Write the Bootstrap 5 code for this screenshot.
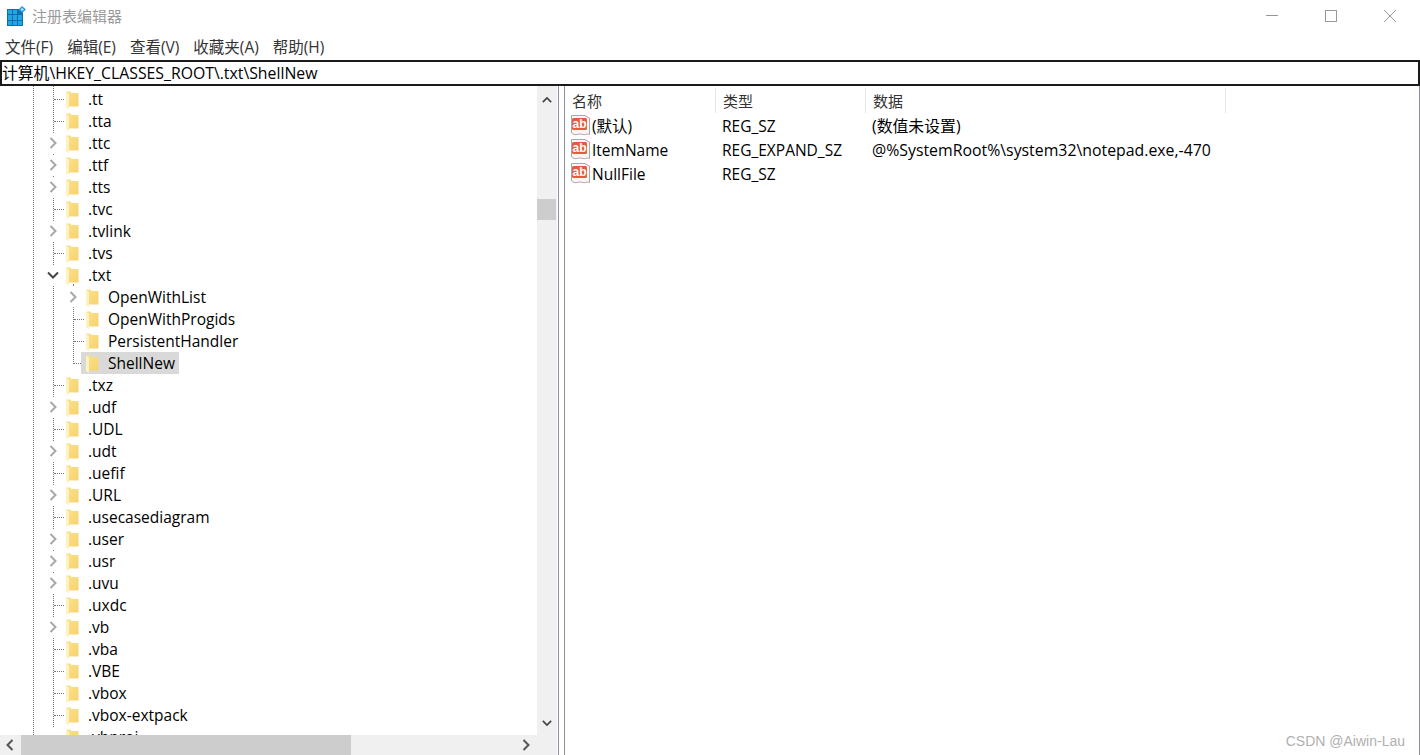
<!DOCTYPE html>
<html lang="zh-CN">
<head>
<meta charset="utf-8">
<title>注册表编辑器</title>
<link href="https://cdn.jsdelivr.net/npm/bootstrap@5.3.0/dist/css/bootstrap.min.css" rel="stylesheet">
<style>
html,body{height:100%;margin:0;overflow:hidden;background:#fff}
body{font-family:"Open Sans","Noto Sans CJK SC",sans-serif;font-size:15.5px;color:#000;line-height:22px}
.reg-win{height:755px;width:1420px;position:relative}
.reg-title{height:35px;padding-left:7px}
.reg-title-icon{margin-top:6px}
.reg-title-text{font-size:15px;color:#999;margin-left:6px;margin-top:5px}
.reg-ctls{margin-right:3px}
.reg-ctl{width:55px;height:32px;display:flex;align-items:center;justify-content:center;margin-left:4px}
.reg-menu{height:25px;padding-left:5px;padding-top:1px;gap:14px;color:#333}
.reg-addr{height:26px;border:2px solid #1a1a1a;padding-left:0;line-height:23px;font-size:15.8px;color:#000;white-space:nowrap;background:#fff}
.reg-body{height:669px}
.reg-left{width:558px}
.reg-tree-wrap{width:537px;position:relative;overflow:hidden}
.reg-vbar{width:20px;background:#f0f0f0;position:relative}
.reg-thumb{position:absolute;left:0;right:1px;top:113px;height:21px;background:#cdcdcd}
.reg-sb-up{position:absolute;left:4px;top:9px}
.reg-sb-dn{position:absolute;left:4px;top:632px}
.reg-hbar{height:20px;background:#f0f0f0;position:relative;margin-right:1px}
.reg-hthumb{position:absolute;left:21px;width:330px;top:0;bottom:0;background:#cdcdcd}
.reg-hl{position:absolute;left:4px;top:4px}
.reg-hr{position:absolute;left:520px;top:4px}
.reg-split{width:7px;border-left:1px solid #8f8fa0;border-right:1px solid #8f8fa0}
.reg-right{border-right:1px solid #8f8fa0;position:relative}
.reg-tree{padding-top:2px}
.reg-row{height:22px;position:relative;white-space:nowrap}
.reg-l1{padding-left:66px}
.reg-l2{padding-left:86px}
.reg-fld{width:13px;height:18px;margin-right:9px;vertical-align:top;margin-top:3px}
.reg-sel{display:inline-block;background:#d9d9d9;height:22px;padding-right:4px;margin-left:-5px;padding-left:5px}
.reg-vline{position:absolute;width:0;border-left:1px dotted #777}
.reg-hline{position:absolute;height:0;border-top:1px dotted #777}
.reg-chev{position:absolute;top:1px;width:12px;height:20px;padding:4px 0;background:#fff;box-sizing:border-box}
.reg-head{height:28px;color:#333;font-size:15px}
.reg-th{padding-left:7px;border-right:1px solid #e5e5e5;height:25px;line-height:26px;margin-top:2px}
.reg-c1{width:151px}
.reg-c2{width:150px}
.reg-c3{width:360px}
.reg-list-row{height:24px;line-height:24px;white-space:nowrap}
.reg-ab{width:21px;height:21px;margin:1px 1px 0 5px;flex:none}
.reg-name{width:130px}
.reg-type{width:150px}
.reg-data{font-size:15.85px}
.reg-mark{position:absolute;right:15px;bottom:5px;font-size:14px;color:#b0b0b0;font-family:"Liberation Sans",sans-serif;line-height:18px}
</style>
</head>
<body>
<svg width="0" height="0" class="d-block position-absolute">
<defs>
<linearGradient id="fg" x1="0" y1="0" x2="1" y2="1"><stop offset="0" stop-color="#fbe28f"/><stop offset="1" stop-color="#f6d169"/></linearGradient>
<symbol id="fld" viewBox="0 0 13 18">
<path d="M0 0.500H4.500L5.500 2H12.500V15.500H3V18L0 16Z" fill="url(#fg)"/>
<path d="M0 0.500L3 3V18L0 16Z" fill="#fef2c0"/>
</symbol>
<symbol id="cr" viewBox="0 0 12 12"><path d="M3.500 1L8.500 6L3.500 11" fill="none" stroke="#a8a8a8" stroke-width="2"/></symbol>
<symbol id="crd" viewBox="0 0 12 12"><path d="M3.500 1L8.500 6L3.500 11" fill="none" stroke="#555" stroke-width="2"/></symbol>
<symbol id="cd" viewBox="0 0 12 12"><path d="M1 3.500L6 8.500L11 3.500" fill="none" stroke="#444" stroke-width="2"/></symbol>
<symbol id="abi" viewBox="0 0 21 21">
<path d="M1.500 0.500H15L19.500 3V19.500C17 18 15.500 20.500 12.500 19.500C9.500 18 7 20.500 4 19.500C3 19 2 18 1.500 18Z" fill="#f6f6f6" stroke="#a8a8a8"/>
<rect x="2" y="3" width="15" height="12" rx="1.500" fill="#e25c40"/>
<text x="9.500" y="13" text-anchor="middle" font-family="Liberation Sans,sans-serif" font-weight="700" font-size="12" fill="#fff">ab</text>
</symbol>
</defs>
</svg>
<div class="reg-win d-flex flex-column">
  <div class="reg-title d-flex align-items-start flex-shrink-0">
    <svg class="reg-title-icon" width="19" height="20" viewBox="0 0 19 20"><rect x="0" y="3" width="16" height="17" fill="#0a6fb0"/><g fill="#27a5e0"><rect x="1" y="4" width="4" height="4"/><rect x="6" y="4" width="4" height="4"/><rect x="1" y="9" width="4" height="5"/><rect x="6" y="9" width="4" height="5"/><rect x="11" y="9" width="4" height="5"/><rect x="1" y="15" width="4" height="4"/><rect x="6" y="15" width="4" height="4"/><rect x="11" y="15" width="4" height="4"/></g><path d="M15 0L19 3.500L15 7L11.500 3.500Z" fill="#2c9ad6"/><path d="M15 2L17 3.500L15 5L13.500 3.500Z" fill="#bfe6f8"/></svg>
    <span class="reg-title-text">注册表编辑器</span>
    <div class="reg-ctls ms-auto d-flex">
      <div class="reg-ctl"><svg width="12" height="2"><rect width="12" height="1" fill="#999"/></svg></div>
      <div class="reg-ctl"><svg width="12" height="12"><rect x=".5" y=".5" width="11" height="11" fill="none" stroke="#999"/></svg></div>
      <div class="reg-ctl"><svg width="12" height="12"><path d="M0 0L12 12M12 0L0 12" stroke="#999"/></svg></div>
    </div>
  </div>
  <div class="reg-menu d-flex flex-shrink-0"><span>文件(F)</span><span>编辑(E)</span><span>查看(V)</span><span>收藏夹(A)</span><span>帮助(H)</span></div>
  <div class="reg-addr flex-shrink-0">计算机\HKEY_CLASSES_ROOT\.txt\ShellNew</div>
  <div class="reg-body d-flex flex-grow-1">
    <div class="reg-left d-flex flex-column flex-shrink-0">
      <div class="d-flex flex-grow-1 overflow-hidden">
        <div class="reg-tree-wrap">
          <div class="reg-vline" style="left:33px;top:0;height:649px"></div>
          <div class="reg-vline" style="left:53px;top:0;height:641px"></div>
          <div class="reg-vline" style="left:73px;top:198px;height:80px"></div>
          <div class="reg-tree">
            <div class="reg-row reg-l1"><i class="reg-hline" style="left:54px;top:11px;width:10px"></i><svg class="reg-fld"><use href="#fld"/></svg>.tt</div>
            <div class="reg-row reg-l1"><i class="reg-hline" style="left:54px;top:11px;width:10px"></i><svg class="reg-fld"><use href="#fld"/></svg>.tta</div>
            <div class="reg-row reg-l1"><svg class="reg-chev" style="left:47px"><use href="#cr"/></svg><svg class="reg-fld"><use href="#fld"/></svg>.ttc</div>
            <div class="reg-row reg-l1"><svg class="reg-chev" style="left:47px"><use href="#cr"/></svg><svg class="reg-fld"><use href="#fld"/></svg>.ttf</div>
            <div class="reg-row reg-l1"><svg class="reg-chev" style="left:47px"><use href="#cr"/></svg><svg class="reg-fld"><use href="#fld"/></svg>.tts</div>
            <div class="reg-row reg-l1"><i class="reg-hline" style="left:54px;top:11px;width:10px"></i><svg class="reg-fld"><use href="#fld"/></svg>.tvc</div>
            <div class="reg-row reg-l1"><svg class="reg-chev" style="left:47px"><use href="#cr"/></svg><svg class="reg-fld"><use href="#fld"/></svg>.tvlink</div>
            <div class="reg-row reg-l1"><i class="reg-hline" style="left:54px;top:11px;width:10px"></i><svg class="reg-fld"><use href="#fld"/></svg>.tvs</div>
            <div class="reg-row reg-l1"><svg class="reg-chev" style="left:47px"><use href="#cd"/></svg><svg class="reg-fld"><use href="#fld"/></svg>.txt</div>
            <div class="reg-row reg-l2"><svg class="reg-chev" style="left:67px"><use href="#cr"/></svg><svg class="reg-fld"><use href="#fld"/></svg>OpenWithList</div>
            <div class="reg-row reg-l2"><i class="reg-hline" style="left:74px;top:11px;width:10px"></i><svg class="reg-fld"><use href="#fld"/></svg>OpenWithProgids</div>
            <div class="reg-row reg-l2"><i class="reg-hline" style="left:74px;top:11px;width:10px"></i><svg class="reg-fld"><use href="#fld"/></svg>PersistentHandler</div>
            <div class="reg-row reg-l2"><i class="reg-hline" style="left:74px;top:11px;width:7px"></i><span class="reg-sel"><svg class="reg-fld"><use href="#fld"/></svg>ShellNew</span></div>
            <div class="reg-row reg-l1"><i class="reg-hline" style="left:54px;top:11px;width:10px"></i><svg class="reg-fld"><use href="#fld"/></svg>.txz</div>
            <div class="reg-row reg-l1"><svg class="reg-chev" style="left:47px"><use href="#cr"/></svg><svg class="reg-fld"><use href="#fld"/></svg>.udf</div>
            <div class="reg-row reg-l1"><i class="reg-hline" style="left:54px;top:11px;width:10px"></i><svg class="reg-fld"><use href="#fld"/></svg>.UDL</div>
            <div class="reg-row reg-l1"><svg class="reg-chev" style="left:47px"><use href="#cr"/></svg><svg class="reg-fld"><use href="#fld"/></svg>.udt</div>
            <div class="reg-row reg-l1"><i class="reg-hline" style="left:54px;top:11px;width:10px"></i><svg class="reg-fld"><use href="#fld"/></svg>.uefif</div>
            <div class="reg-row reg-l1"><svg class="reg-chev" style="left:47px"><use href="#cr"/></svg><svg class="reg-fld"><use href="#fld"/></svg>.URL</div>
            <div class="reg-row reg-l1"><i class="reg-hline" style="left:54px;top:11px;width:10px"></i><svg class="reg-fld"><use href="#fld"/></svg>.usecasediagram</div>
            <div class="reg-row reg-l1"><svg class="reg-chev" style="left:47px"><use href="#cr"/></svg><svg class="reg-fld"><use href="#fld"/></svg>.user</div>
            <div class="reg-row reg-l1"><svg class="reg-chev" style="left:47px"><use href="#cr"/></svg><svg class="reg-fld"><use href="#fld"/></svg>.usr</div>
            <div class="reg-row reg-l1"><svg class="reg-chev" style="left:47px"><use href="#cr"/></svg><svg class="reg-fld"><use href="#fld"/></svg>.uvu</div>
            <div class="reg-row reg-l1"><i class="reg-hline" style="left:54px;top:11px;width:10px"></i><svg class="reg-fld"><use href="#fld"/></svg>.uxdc</div>
            <div class="reg-row reg-l1"><svg class="reg-chev" style="left:47px"><use href="#cr"/></svg><svg class="reg-fld"><use href="#fld"/></svg>.vb</div>
            <div class="reg-row reg-l1"><i class="reg-hline" style="left:54px;top:11px;width:10px"></i><svg class="reg-fld"><use href="#fld"/></svg>.vba</div>
            <div class="reg-row reg-l1"><i class="reg-hline" style="left:54px;top:11px;width:10px"></i><svg class="reg-fld"><use href="#fld"/></svg>.VBE</div>
            <div class="reg-row reg-l1"><i class="reg-hline" style="left:54px;top:11px;width:10px"></i><svg class="reg-fld"><use href="#fld"/></svg>.vbox</div>
            <div class="reg-row reg-l1"><i class="reg-hline" style="left:54px;top:11px;width:10px"></i><svg class="reg-fld"><use href="#fld"/></svg>.vbox-extpack</div>
            <div class="reg-row reg-l1"><svg class="reg-fld"><use href="#fld"/></svg>.vbproj</div>
          </div>
        </div>
        <div class="reg-vbar">
          <svg class="reg-sb-up" width="12" height="10"><use href="#cd" transform="rotate(180 6 5)"/></svg>
          <div class="reg-thumb"></div>
          <svg class="reg-sb-dn" width="12" height="10"><use href="#cd"/></svg>
        </div>
      </div>
      <div class="reg-hbar flex-shrink-0">
        <svg class="reg-hl" width="12" height="12"><use href="#crd" transform="rotate(180 6 6)"/></svg>
        <div class="reg-hthumb"></div>
        <svg class="reg-hr" width="12" height="12"><use href="#crd"/></svg>
      </div>
    </div>
    <div class="reg-split flex-shrink-0"></div>
    <div class="reg-right flex-grow-1">
      <div class="reg-head d-flex">
        <div class="reg-th reg-c1">名称</div>
        <div class="reg-th reg-c2">类型</div>
        <div class="reg-th reg-c3">数据</div>
      </div>
      <div class="reg-list-row d-flex"><svg class="reg-ab"><use href="#abi"/></svg><span class="reg-name">(默认)</span><span class="reg-type">REG_SZ</span><span class="reg-data">(数值未设置)</span></div>
      <div class="reg-list-row d-flex"><svg class="reg-ab"><use href="#abi"/></svg><span class="reg-name">ItemName</span><span class="reg-type">REG_EXPAND_SZ</span><span class="reg-data">@%SystemRoot%\system32\notepad.exe,-470</span></div>
      <div class="reg-list-row d-flex"><svg class="reg-ab"><use href="#abi"/></svg><span class="reg-name">NullFile</span><span class="reg-type">REG_SZ</span></div>
    </div>
  </div>
  <div class="reg-mark">CSDN @Aiwin-Lau</div>
</div>
</body>
</html>
